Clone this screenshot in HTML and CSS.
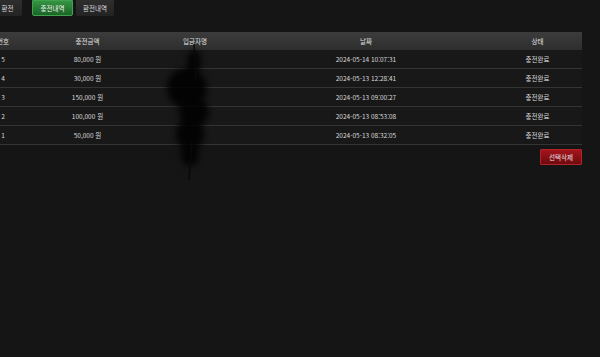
FILE: index.html
```html
<!DOCTYPE html>
<html lang="ko">
<head>
    <meta charset="UTF-8">
    <meta name="viewport" content="width=device-width, initial-scale=1.0">
    <title>충전내역</title>
    <link rel="stylesheet" href="styles.css">
</head>
<body>
    <div class="page">
        <!-- Tabs -->
        <div class="tabs">
            <a class="tab tab-first">환전</a>
            <a class="tab tab-active">충전내역</a>
            <a class="tab tab-last">환전내역</a>
        </div>

        <!-- History table -->
        <table class="history">
            <thead>
                <tr>
                    <th class="col-no">번호</th>
                    <th class="col-amount">충전금액</th>
                    <th class="col-name">입금자명</th>
                    <th class="col-date">날짜</th>
                    <th class="col-state">상태</th>
                </tr>
            </thead>
            <tbody>
                <tr><td>5</td><td>80,000 원</td><td></td><td>2024-05-14 10:07:31</td><td>충전완료</td></tr>
                <tr><td>4</td><td>30,000 원</td><td></td><td>2024-05-13 12:28:41</td><td>충전완료</td></tr>
                <tr><td>3</td><td>150,000 원</td><td></td><td>2024-05-13 09:00:27</td><td>충전완료</td></tr>
                <tr><td>2</td><td>100,000 원</td><td></td><td>2024-05-13 08:53:08</td><td>충전완료</td></tr>
                <tr><td>1</td><td>50,000 원</td><td></td><td>2024-05-13 08:32:05</td><td>충전완료</td></tr>
            </tbody>
        </table>

        <div class="actions">
            <button class="btn-delete">선택삭제</button>
        </div>

        <!-- censor scribble over the depositor column -->
        <svg class="scribble" width="70" height="150" viewBox="0 0 70 150">
            <defs>
                <filter id="soft"><feGaussianBlur stdDeviation="3"/></filter>
            </defs>
            <g filter="url(#soft)" fill="#060606">
                <ellipse cx="34" cy="22" rx="7" ry="12"/>
                <ellipse cx="27" cy="48" rx="20" ry="20"/>
                <ellipse cx="34" cy="72" rx="15" ry="14"/>
                <ellipse cx="30" cy="94" rx="14" ry="16"/>
                <ellipse cx="30" cy="114" rx="9" ry="12"/>
            </g>
            <path d="M34 4 L36 40 M32 100 L29 140" stroke="#070707" stroke-width="1.5" fill="none"/>
        </svg>
    </div>
</body>
</html>
```

FILE: styles.css
```css
body {
    margin: 0;
    padding: 0;
    background-color: #151515;
    font-family: "Noto Sans CJK KR", "Noto Sans", sans-serif;
    font-size: 6.5px;
    color: #d8d8d8;
    overflow: hidden;
}

.page {
    position: relative;
    height: 357px;
}

/* tabs */
.tabs {
    display: flex;
    height: 16px;
    margin-left: -7px;
}

.tab {
    display: flex;
    align-items: center;
    justify-content: center;
    height: 16px;
    box-sizing: border-box;
    color: #dcdcdc;
    background: linear-gradient(#2e2e2e, #232323);
    border-radius: 0 0 2px 2px;
}

.tab-first {
    width: 29px;
}

.tab-active {
    width: 41px;
    margin-left: 10px;
    background: linear-gradient(#359443, #1c6428);
    border: 1px solid #3fa24c;
    color: #f2f2f2;
}

.tab-last {
    width: 38px;
    margin-left: 3px;
}

/* table */
.history {
    margin-top: 16px;
    margin-left: -18px;
    width: 600px;
    border-collapse: collapse;
    table-layout: fixed;
}

.history th {
    height: 18px;
    padding: 0;
    font-weight: normal;
    color: #e0e0e0;
    background: linear-gradient(#3c3c3c, #2e2e2e);
}

.history td {
    height: 18px;
    padding: 0;
    text-align: center;
    background-color: #181818;
    border-bottom: 1px solid #343434;
}

.col-no { width: 42px; }
.col-amount { width: 127px; }
.col-name { width: 88px; }
.col-date { width: 254px; }
.col-state { width: 89px; }

/* delete button */
.actions {
    display: flex;
    justify-content: flex-end;
    width: 582px;
    margin-top: 4px;
}

.btn-delete {
    width: 42px;
    height: 16px;
    padding: 0;
    border: 1px solid #b3242a;
    border-radius: 1px;
    background: linear-gradient(#a3151b, #6e0a0f);
    color: #f0e0e0;
    font-family: inherit;
    font-size: 6.5px;
}

.scribble {
    position: absolute;
    left: 160px;
    top: 40px;
    opacity: 0.85;
}
```
